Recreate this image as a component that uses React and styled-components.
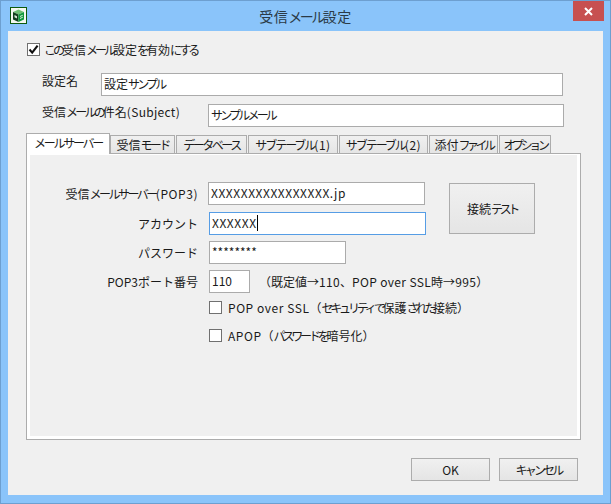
import React from 'react'
import styled, { createGlobalStyle } from 'styled-components'

const Global = createGlobalStyle`
  html, body { margin: 0; padding: 0; background: #8ac4fa; }
  * { box-sizing: border-box; }
  body {
    font-family: "Noto Sans CJK JP", "Noto Sans", sans-serif;
    font-size: 12px;
    color: #1a1a1a;
    --kana: -0.233em;
    --latin: 0.55px;
  }
`

const tabs = [
  { label: 'メールサーバー', width: 84, kana: -0.19, active: true },
  { label: '受信モード', width: 65, kana: -0.22 },
  { label: 'データベース', width: 71, kana: -0.21 },
  { label: 'サブテーブル(1)', width: 90, kana: -0.17 },
  { label: 'サブテーブル(2)', width: 89, kana: -0.17 },
  { label: '添付ファイル', width: 69, kana: -0.29 },
  { label: 'オプション', width: 52, kana: -0.28 },
]

const Txt = ({ children }) =>
  children.split(/([\u3040-\u30ff]+|[\x20-\x7e]+)/).map((part, i) => {
    if (i % 2 === 0) return part
    return /^[\x20-\x7e]/.test(part)
      ? <Latin key={i}>{part}</Latin>
      : <Kana key={i}>{part}</Kana>
  })

const AppIcon = () => (
  <IconBox>
    <svg width="17" height="17" viewBox="0 0 17 17">
      <rect x="0.5" y="0.5" width="16" height="16" fill="#f4f8f0" stroke="#0d5a0d" />
      <path d="M3 5 L8.5 2.5 L14 5 L8.5 7.5 Z" fill="#6fbf73" />
      <path d="M3 5 L8.5 7.5 V15 L3 12.5 Z" fill="#123f1c" />
      <path d="M14 5 L8.5 7.5 V15 L14 12.5 Z" fill="#0f9a3c" />
      <path d="M4.5 8 L7 9.2 V11.5 L4.5 10.3 Z" fill="#d9e8d9" />
      <path d="M10 9.5 L12.8 8.2 M10 11.5 L12.8 10.2" stroke="#d5f0d5" strokeWidth="1" />
    </svg>
  </IconBox>
)

const CheckMark = () => (
  <svg width="11" height="11" viewBox="0 0 11 11">
    <path d="M1.5 5.5 L4.2 8.6 L9.6 1.6" fill="none" stroke="#111" strokeWidth="2.1" />
  </svg>
)

const App = () => {
  return (
    <Window>
      <Global />
      <TitleBar>
        <AppIcon />
        <Title><Txt>受信メール設定</Txt></Title>
        <CloseButton>
          <svg width="9" height="9" viewBox="0 0 9 9">
            <path d="M1 1 L8 8 M8 1 L1 8" stroke="#fff" strokeWidth="2" />
          </svg>
        </CloseButton>
      </TitleBar>
      <Client>
        <EnableRow>
          <CheckBox><CheckMark /></CheckBox>
          <span><Txt>この受信メール設定を有効にする</Txt></span>
        </EnableRow>
        <NameRow>
          <TopLabel $width={59}>設定名</TopLabel>
          <TopBox $width={462}><Txt>設定サンプル</Txt></TopBox>
        </NameRow>
        <SubjectRow>
          <TopLabel $width={166}><Txt>受信メールの件名(Subject)</Txt></TopLabel>
          <TopBox $width={356}><Txt>サンプルメール</Txt></TopBox>
        </SubjectRow>
        <TabStrip>
          {tabs.map((t) => (
            <Tab key={t.label} $active={t.active} $width={t.width} $kana={t.kana}><Txt>{t.label}</Txt></Tab>
          ))}
        </TabStrip>
        <Panel>
          <PanelInner>
            <FormColumn>
              <FormRow $gap={7}>
                <FieldLabel $inset={10}><Txt>受信メールサーバー(POP3)</Txt></FieldLabel>
                <TextBox $width={217}><Txt>XXXXXXXXXXXXXXXX.jp</Txt></TextBox>
              </FormRow>
              <FormRow $gap={6}>
                <FieldLabel $wide><Txt>アカウント</Txt></FieldLabel>
                <TextBox $width={217} $focused><Txt>XXXXXX</Txt><Caret /></TextBox>
              </FormRow>
              <FormRow $gap={6}>
                <FieldLabel $wide><Txt>パスワード</Txt></FieldLabel>
                <TextBox $width={137}>********</TextBox>
              </FormRow>
              <FormRow $gap={8}>
                <PortLabel $wide><Txt>POP3ポート番号</Txt></PortLabel>
                <TextBox $width={41}>110</TextBox>
                <Hint><Txt>（既定値→110、POP over SSL時→995）</Txt></Hint>
              </FormRow>
              <OptionRow $gap={15}>
                <CheckBox />
                <span><Txt>POP over SSL（セキュリティで保護された接続）</Txt></span>
              </OptionRow>
              <OptionRow>
                <CheckBox />
                <span><Txt>APOP（パスワードを暗号化）</Txt></span>
              </OptionRow>
            </FormColumn>
            <TestButton><Txt>接続テスト</Txt></TestButton>
          </PanelInner>
        </Panel>
        <Footer>
          <DialogButton>OK</DialogButton>
          <DialogButton><Txt>キャンセル</Txt></DialogButton>
        </Footer>
      </Client>
    </Window>
  )
}

export default App

const Kana = styled.span`
  letter-spacing: var(--kana);
`
const Latin = styled.span`
  letter-spacing: var(--latin);
`
const Window = styled.div`
  width: 611px;
  height: 504px;
  border: 1px solid #6d9fd0;
  background: #8ac4fa;
  display: flex;
  flex-direction: column;
  overflow: hidden;
`
const TitleBar = styled.div`
  height: 30px;
  flex: none;
  position: relative;
  display: flex;
  align-items: center;
  justify-content: center;
`
const IconBox = styled.div`
  position: absolute;
  left: 9px;
  top: 6px;
  width: 17px;
  height: 17px;
  line-height: 0;
`
const Title = styled.div`
  --kana: -0.18em;
  font-size: 14px;
  letter-spacing: 0.5px;
  color: #2b3a46;
  line-height: 20px;
`
const CloseButton = styled.div`
  position: absolute;
  right: 6px;
  top: 0;
  width: 31px;
  height: 20px;
  background: #c75050;
  display: flex;
  align-items: center;
  justify-content: center;
`
const Client = styled.div`
  flex: 1;
  margin: 0 7px 8px 7px;
  background: #f0f0f0;
  padding: 12px 0 0 18px;
  display: flex;
  flex-direction: column;
`
const EnableRow = styled.div`
  --kana: -0.25em;
  display: flex;
  align-items: center;
  gap: 4px;
  height: 13px;
  margin-left: 1px;
  line-height: 14px;
`
const CheckBox = styled.div`
  width: 13px;
  height: 13px;
  flex: none;
  background: #fff;
  border: 1px solid #707070;
  display: flex;
  align-items: center;
  justify-content: center;
`
const NameRow = styled.div`
  height: 23px;
  margin-top: 17px;
  display: flex;
  align-items: flex-start;
  padding-left: 16px;
`
const SubjectRow = styled(NameRow)`
  --latin: 0.3px;
  margin-top: 8px;
`
const TopLabel = styled.div`
  width: ${(p) => p.$width}px;
  line-height: 16px;
  white-space: nowrap;
`
const BoxBase = styled.div`
  background: #fff;
  border: 1px solid #ababab;
  height: 23px;
  padding: 0 2px;
  line-height: 20px;
  white-space: nowrap;
  overflow: hidden;
  flex: none;
`
const TopBox = styled(BoxBase)`
  width: ${(p) => p.$width}px;
`
const TabStrip = styled.div`
  display: flex;
  align-items: flex-start;
  height: 20px;
  margin-top: 6px;
  position: relative;
  z-index: 1;
`
const Tab = styled.div`
  --kana: ${(p) => p.$kana}em;
  width: ${(p) => p.$width}px;
  height: ${(p) => (p.$active ? 21 : 18)}px;
  margin-top: ${(p) => (p.$active ? 0 : 2)}px;
  margin-right: ${(p) => (p.$active ? 0 : 1)}px;
  border: 1px solid #acacac;
  border-bottom: none;
  background: ${(p) => (p.$active ? '#fff' : 'linear-gradient(#f0f0f0, #e5e5e5)')};
  text-align: center;
  line-height: 17px;
  white-space: nowrap;
`
const Panel = styled.div`
  width: 555px;
  height: 287px;
  border: 1px solid #acacac;
  background: #fff;
  padding: 1px 3px 3px 3px;
`
const PanelInner = styled.div`
  height: 100%;
  background: #f0f0f0;
  display: flex;
  align-items: flex-start;
  padding-top: 27px;
`
const FormColumn = styled.div`
  width: 419px;
  flex: none;
  display: flex;
  flex-direction: column;
`
const FormRow = styled.div`
  display: flex;
  align-items: center;
  height: 23px;
  margin-bottom: ${(p) => p.$gap}px;
`
const FieldLabel = styled.div`
  --kana: ${(p) => (p.$wide ? '0em' : '-0.21em')};
  width: 168px;
  flex: none;
  margin-right: ${(p) => p.$inset || 11}px;
  padding-bottom: 1px;
  text-align: right;
  white-space: nowrap;
`
const PortLabel = styled(FieldLabel)`
  --latin: 0px;
`
const TextBox = styled(BoxBase)`
  width: ${(p) => p.$width}px;
  height: 100%;
  border-color: ${(p) => (p.$focused ? '#569de5' : '#ababab')};
`
const Caret = styled.span`
  display: inline-block;
  width: 1px;
  height: 16px;
  background: #000;
  vertical-align: -3px;
`
const Hint = styled.div`
  --latin: 0.35px;
  margin-left: 9px;
  white-space: nowrap;
`
const OptionRow = styled.div`
  --kana: -0.265em;
  display: flex;
  align-items: center;
  gap: 6px;
  height: 13px;
  margin-left: 179px;
  margin-bottom: ${(p) => p.$gap || 0}px;
  white-space: nowrap;
`
const TestButton = styled.div`
  --kana: -0.28em;
  width: 86px;
  height: 51px;
  margin-top: 1px;
  border: 1px solid #acacac;
  background: linear-gradient(#f0f0f0, #e5e5e5);
  display: flex;
  align-items: center;
  justify-content: center;
`
const Footer = styled.div`
  display: flex;
  justify-content: flex-end;
  gap: 9px;
  margin-top: 18px;
  width: 552px;
`
const DialogButton = styled.div`
  width: 79px;
  height: 23px;
  flex: none;
  border: 1px solid #acacac;
  background: linear-gradient(#f0f0f0, #e5e5e5);
  display: flex;
  align-items: center;
  justify-content: center;
`
